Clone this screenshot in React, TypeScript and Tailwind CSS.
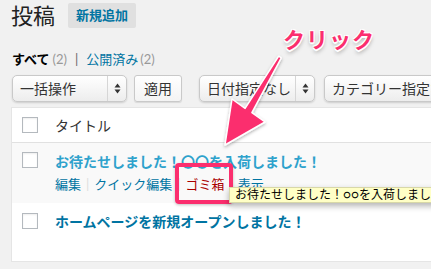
import React from 'react';

const jp = "font-['Lato','Noto_Sans_CJK_JP',sans-serif]";

const Arrows: React.FC = () => (
  <svg width="7" height="11" viewBox="0 0 7 11" className="shrink-0">
    <path d="M3.5 0.5 L6.5 4.5 L0.5 4.5 Z" fill="#333" />
    <path d="M3.5 10.5 L6.5 6.5 L0.5 6.5 Z" fill="#333" />
  </svg>
);

const Select: React.FC<{ label: string; width: string; arrows?: boolean }> = ({ label, width, arrows = true }) => (
  <div
    className={`${width} h-[27px] shrink-0 flex items-stretch rounded-[5px] border border-[#c9c9c9] bg-gradient-to-b from-white to-[#ededed] shadow-[0_1px_2px_rgba(0,0,0,0.15)] text-[14px] text-[#333]`}
  >
    <div className="flex-1 flex items-center pl-[7px] overflow-hidden whitespace-nowrap">{label}</div>
    {arrows && (
      <div className="w-[19px] border-l border-[#d6d6d6] flex items-center justify-center">
        <Arrows />
      </div>
    )}
  </div>
);

const Checkbox: React.FC = () => (
  <div className="w-[16px] h-[16px] border border-[#b4b9be] bg-white shadow-[inset_0_1px_2px_rgba(0,0,0,0.07)]" />
);

const App: React.FC = () => {
  return (
    <div className={`relative w-[431px] h-[269px] overflow-hidden bg-[#f1f1f1] ${jp}`}>
      <div className="pl-[11px]">
        {/* heading */}
        <div className="flex items-center gap-[13px] h-[25px] mt-[3px]">
          <h1 className="text-[22px] leading-[25px] text-[#222]">投稿</h1>
          <div className="w-[68px] h-[25px] flex items-center justify-center bg-[#e0e0e0] rounded-[2px] text-[13px] font-bold text-[#0074a2]">
            新規追加
          </div>
        </div>

        {/* filters */}
        <div className="mt-[23px] h-[16px] flex items-center text-[13px] leading-[16px] pl-[1px]">
          <span className="font-bold text-black">すべて</span>
          <span className="ml-[3px] text-[#999]">(2)</span>
          <span className="mx-[8px] text-[#666]">|</span>
          <span className="text-[#0074a2]">公開済み</span>
          <span className="ml-[2px] text-[#999]">(2)</span>
        </div>

        {/* tablenav */}
        <div className="mt-[8px] flex items-center pl-[1px] w-[600px]">
          <Select label="一括操作" width="w-[115px]" />
          <div className="ml-[7px] shrink-0 w-[48px] h-[27px] flex items-center justify-center rounded-[3px] border border-[#c9c9c9] bg-gradient-to-b from-white to-[#f3f3f3] shadow-[0_1px_1px_rgba(0,0,0,0.1)] text-[14px] text-[#333] whitespace-nowrap">
            適用
          </div>
          <div className="ml-[17px] shrink-0">
            <Select label="日付指定なし" width="w-[116px]" />
          </div>
          <div className="ml-[9px] shrink-0">
            <Select label="カテゴリー指定なし" width="w-[150px]" arrows={false} />
          </div>
        </div>

        {/* table */}
        <div className="mt-[5px] w-[440px] bg-white border-l border-t border-b border-[#e5e5e5]">
          <div className="h-[35px] flex items-center border-b border-[#e1e1e1]">
            <div className="w-[43px] pl-[10px]">
              <Checkbox />
            </div>
            <span className="text-[14px] text-[#333]">タイトル</span>
          </div>

          <div className="h-[60px] bg-[#f9f9f9] flex items-start pt-[9px]">
            <div className="w-[43px] pl-[10px]">
              <Checkbox />
            </div>
            <div className="flex flex-col">
              <span className="text-[14px] leading-[19px] font-bold text-[#2ea2cc] whitespace-nowrap">
                お待たせしました！〇〇を入荷しました！
              </span>
              <div className="mt-[4px] flex items-center text-[13px] leading-[18px] whitespace-nowrap">
                <span className="text-[#0074a2]">編集</span>
                <span className="mx-[5px] text-[#ddd]">|</span>
                <span className="text-[#0074a2]">クイック編集</span>
                <span className="mx-[5px] text-[#ddd]">|</span>
                <span className="text-[#a00]">ゴミ箱</span>
                <span className="mx-[5px] text-[#ddd]">|</span>
                <span className="text-[#0074a2]">表示</span>
              </div>
            </div>
          </div>

          <div className="h-[58px] flex items-start pt-[10px]">
            <div className="w-[43px] pl-[10px]">
              <Checkbox />
            </div>
            <span className="text-[14px] leading-[18px] font-bold text-[#0074a2] whitespace-nowrap">
              ホームページを新規オープンしました！
            </span>
          </div>
        </div>
      </div>

      {/* highlight box */}
      <div className="absolute left-[175px] top-[163px] w-[58px] h-[41px] border-[4px] border-[#fb2e6e] rounded-[4px] shadow-[0_1px_3px_rgba(0,0,0,0.25)]" />

      {/* tooltip */}
      <div className="absolute left-[229px] top-[187px] h-[16px] pl-[5px] pr-[4px] flex items-center bg-[#ffffc6] border border-[#d8d8a8] shadow-[0_3px_6px_rgba(0,0,0,0.3)] text-[12px] leading-[14px] text-black whitespace-nowrap">
        お待たせしました！○○を入荷しました！
      </div>

      {/* arrow */}
      <svg
        className="absolute left-0 top-0 pointer-events-none"
        width="431"
        height="269"
        viewBox="0 0 431 269"
      >
        <defs>
          <filter id="sh" x="-20%" y="-20%" width="140%" height="140%">
            <feDropShadow dx="0" dy="1.5" stdDeviation="1.5" floodColor="#000" floodOpacity="0.3" />
          </filter>
        </defs>
        <polygon
          points="278.7,56.2 245.1,108.4 232,99 225,145 265,122 251.9,112.6 281.3,57.8"
          fill="#fb2e6e"
          stroke="#fff"
          strokeWidth="1.5"
          strokeLinejoin="round"
          filter="url(#sh)"
        />
      </svg>

      {/* annotation */}
      <div className="absolute left-[283px] top-[26px] text-[22px] leading-[28px] font-bold tracking-[1px] text-[#fb2e6e] [text-shadow:1px_1px_0_#fff,-1px_-1px_0_#fff,1px_-1px_0_#fff,-1px_1px_0_#fff,0_2px_0_#fff,0_3px_4px_rgba(0,0,0,0.35)]">
        クリック
      </div>
    </div>
  );
};

export default App;
